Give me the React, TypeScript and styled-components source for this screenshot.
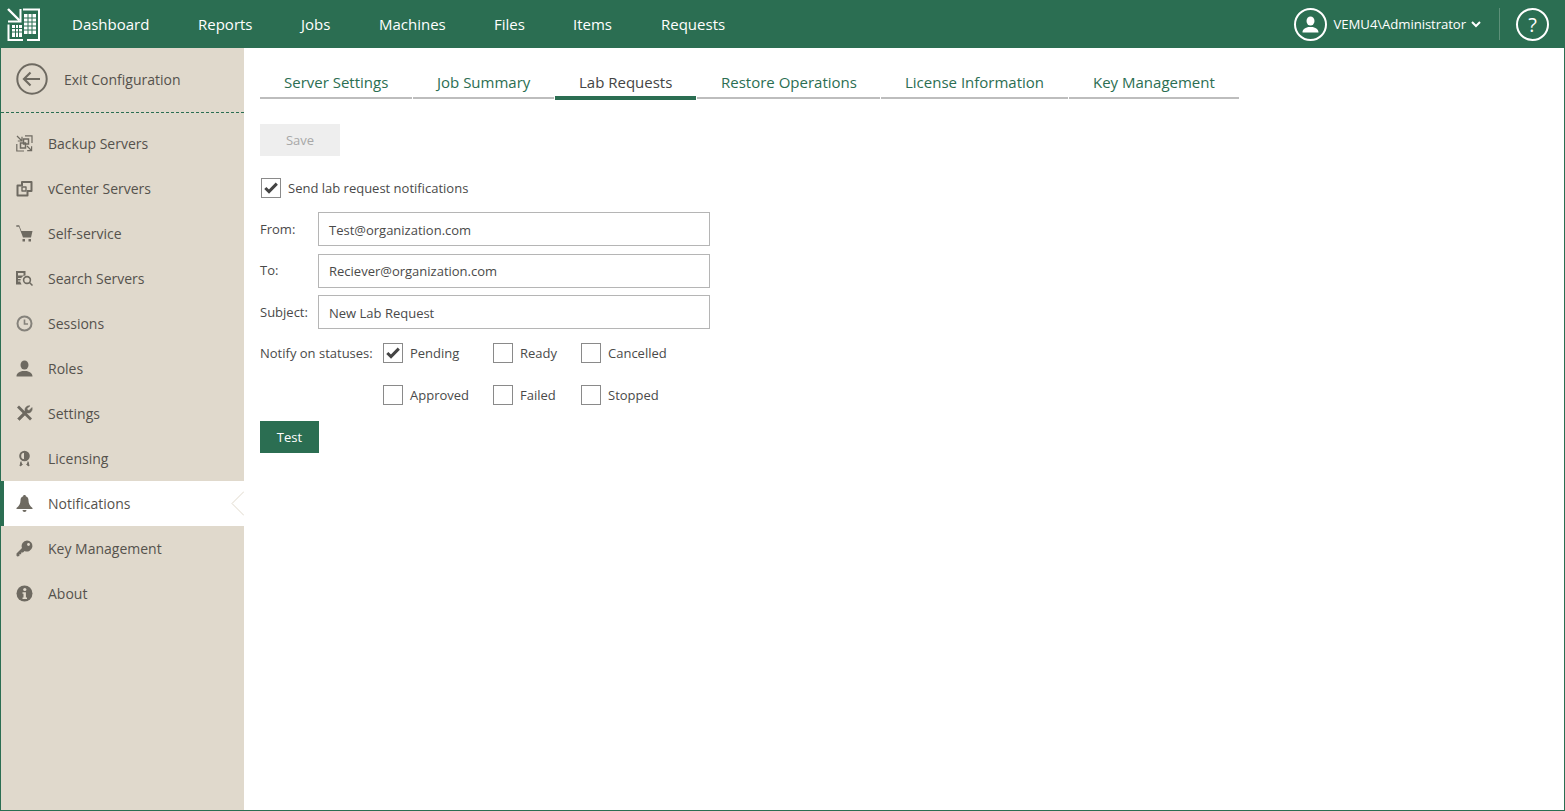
import React from "react";
import styled, { createGlobalStyle } from "styled-components";

const GREEN = "#2b6e52";
const TAN = "#e0d9cc";
const ICON = "#6e6a61";

const Global = createGlobalStyle`
  html, body { margin: 0; padding: 0; height: 100%; overflow: hidden; }
  body { font-family: "Open Sans", "Noto Sans", sans-serif; background: #fff; }
  #root { height: 100%; }
  * { box-sizing: border-box; }
`;

const Page = styled.div`
  width: 1565px;
  height: 811px;
  display: flex;
  flex-direction: column;
  border: solid ${GREEN};
  border-width: 0 1px 1px 1px;
`;

const TopBar = styled.header`
  height: 48px;
  margin: 0 -1px;
  flex: none;
  background: ${GREEN};
  color: #fff;
  display: flex;
  align-items: center;
`;

const LogoBox = styled.div`
  width: 48px;
  padding-left: 7px;
  display: flex;
  align-items: center;
`;

const NavList = styled.nav`
  display: flex;
  flex: 1;
`;

const NavItem = styled.a<{ $w: number }>`
  font-size: 15px;
  width: ${(p) => p.$w}px;
  padding-left: 24px;
  color: #fff;
  white-space: nowrap;
`;

const UserBox = styled.div`
  display: flex;
  align-items: center;
  font-size: 13.2px;
  letter-spacing: -0.09px;
  margin-right: 16px;
`;

const RoundIcon = styled.div`
  width: 33px;
  height: 33px;
  border: 2px solid #fff;
  border-radius: 50%;
  display: flex;
  align-items: center;
  justify-content: center;
  font-size: 20px;
`;

const UserName = styled.span`
  margin: 0 5px 0 7px;
  white-space: nowrap;
`;

const Divider = styled.div`
  width: 1px;
  height: 32px;
  background: #5d9079;
  margin: 0 16px 0 18px;
`;

const Body = styled.div`
  flex: 1;
  display: flex;
  min-height: 0;
`;

const Sidebar = styled.aside`
  width: 243px;
  flex: none;
  background: ${TAN};
  color: #55524c;
  font-size: 14px;
`;

const ExitRow = styled.div`
  height: 65px;
  border-bottom: 1px dashed ${GREEN};
  display: flex;
  align-items: center;
  padding: 0 0 2px 15px;
  gap: 16px;
  margin-bottom: 8px;
`;

const MenuList = styled.ul`
  list-style: none;
  margin: 0;
  padding: 0;
`;

const MenuRow = styled.li<{ $active?: boolean }>`
  position: relative;
  height: 45px;
  display: flex;
  align-items: center;
  padding-left: ${(p) => (p.$active ? "12px" : "15px")};
  gap: 15px;
  background: ${(p) => (p.$active ? "#fff" : "transparent")};
  border-left: ${(p) => (p.$active ? `3px solid ${GREEN}` : "0")};
`;

const Notch = styled.svg`
  position: absolute;
  right: 0;
  top: 10px;
`;

const IconSlot = styled.span`
  width: 17px;
  height: 17px;
  display: flex;
  align-items: center;
  justify-content: center;
  flex: none;
`;

const Main = styled.main`
  flex: 1;
  padding: 22px 0 0 16px;
  color: #444;
  font-size: 13px;
`;

const TabStrip = styled.div`
  display: flex;
  height: 30px;
  gap: 1px;
`;

const Tab = styled.a<{ $w: number; $active?: boolean }>`
  width: ${(p) => p.$w}px;
  padding: 1px 0 0 24px;
  font-size: 15px;
  line-height: 22px;
  white-space: nowrap;
  color: ${(p) => (p.$active ? "#444" : GREEN)};
  border-bottom: ${(p) => (p.$active ? `4px solid ${GREEN}` : "2px solid #bdbdbd")};
  height: ${(p) => (p.$active ? "30px" : "29px")};
`;

const SaveButton = styled.div`
  width: 80px;
  height: 32px;
  margin-top: 24px;
  background: #eeeeee;
  color: #a8a8a8;
  display: flex;
  align-items: center;
  justify-content: center;
`;

const TestButton = styled.div`
  width: 59px;
  height: 32px;
  margin-top: 5px;
  background: ${GREEN};
  color: #fff;
  display: flex;
  align-items: center;
  justify-content: center;
`;

const Box = styled.span`
  width: 20px;
  height: 20px;
  flex: none;
  border: 1px solid #8a8a8a;
  background: #fff;
  display: flex;
  align-items: center;
  justify-content: center;
`;

const CheckLabel = styled.label`
  display: flex;
  align-items: center;
  gap: 7px;
  white-space: nowrap;
  color: #4a4a4a;
`;

const TopCheck = styled.div`
  margin: 22px 0 14px 1px;
`;

const FieldGrid = styled.div`
  display: grid;
  grid-template-columns: 58px 392px;
  width: 450px;
  row-gap: 7.5px;
`;

const FieldLabel = styled.div`
  color: #4a4a4a;
  padding-top: 7.5px;
`;

const InputBox = styled.div`
  height: 34px;
  border: 1px solid #b5b5b5;
  padding: 1px 0 0 10px;
  display: flex;
  align-items: center;
  color: #4a4a4a;
`;

const StatusRow = styled.div`
  display: grid;
  grid-template-columns: 123px 110px 88px auto;
  grid-auto-rows: 42px;
  width: 460px;
  align-items: center;
  margin-top: 3px;
`;

const StatusHead = styled.div`
  color: #4a4a4a;
`;

const Check = () => (
  <svg width="14" height="12" viewBox="0 0 14 12">
    <path d="M1.300 6 5 9.600 12.800 1.600" fill="none" stroke="#444" strokeWidth="3" />
  </svg>
);

const Logo = () => (
  <svg width="33" height="33" viewBox="0 0 33 33" fill="none" stroke="#fff">
    <path d="M1 1 12.500 12.500" strokeWidth="2.400" />
    <path d="M13.500 1V13.500H1" strokeWidth="2" />
    <path d="M16 1.500H32V32H20" strokeWidth="2" />
    <path d="M1.500 16.500V32H16" strokeWidth="2" />
    <rect x="17" y="6" width="12" height="20" fill="#fff" stroke="none" />
    <path d="M17 10H29M17 14H29M17 18H29M17 22H29M21 6V26M25 6V26" stroke={GREEN} strokeWidth="1" />
    <rect x="5" y="17" width="10" height="12" fill="#fff" stroke="none" />
    <path d="M5 20.500H15M5 24H15M8.500 17V29M11.500 17V29" stroke={GREEN} strokeWidth="1" />
  </svg>
);

const icons: Record<string, React.ReactNode> = {
  backup: (
    <svg width="17" height="17" viewBox="0 0 17 17" fill="none" stroke={ICON} strokeWidth="1.200">
      <path d="M1 1 5.500 5.500M6 1.800V6H1.800" />
      <path d="M11 11l4.500 4.500M15.600 11.200V15.600H11.200" />
      <path d="M9 .8H16V8M.8 9V16H8" />
      <rect x="7.500" y="4" width="5" height="5" strokeWidth="1.500" />
      <rect x="4.500" y="8" width="5" height="5" strokeWidth="1.500" />
    </svg>
  ),
  vcenter: (
    <svg width="17" height="17" viewBox="0 0 17 17" fill="none" stroke={ICON} strokeWidth="2" strokeLinejoin="round">
      <path d="M6 5.500V2H15.500V11H11.500V15.500H1.500V5.500Z" />
      <path d="M6 7H10V11H6Z" strokeWidth="1.400" />
    </svg>
  ),
  cart: (
    <svg width="17" height="17" viewBox="0 0 17 17" fill={ICON}>
      <path d="M.3 .3H3.200L5.400 6H16.500L15 12.500H7L3 1.700H.3Z" />
      <rect x="6.500" y="14" width="2.500" height="2.500" />
      <rect x="12.500" y="14" width="2.500" height="2.500" />
    </svg>
  ),
  search: (
    <svg width="17" height="17" viewBox="0 0 17 17" fill={ICON}>
      <path d="M0 1H9.500V5.500A5.500 5.500 0 0 0 5.600 14.500H0Z" />
      <rect x="2" y="3" width="5.500" height="2.500" fill={TAN} />
      <rect x="2" y="8" width="3" height="1" fill={TAN} />
      <rect x="2" y="10.500" width="3" height="1" fill={TAN} />
      <circle cx="11" cy="10" r="3.400" fill="none" stroke={ICON} strokeWidth="1.600" />
      <path d="M13.500 12.500 16.500 15.500" stroke={ICON} strokeWidth="1.500" />
    </svg>
  ),
  clock: (
    <svg width="17" height="17" viewBox="0 0 17 17" fill="none" stroke="#85827b" strokeWidth="2">
      <circle cx="8.500" cy="8.500" r="7" />
      <path d="M8.500 4.500V9H12" strokeWidth="1.600" />
    </svg>
  ),
  user: (
    <svg width="17" height="17" viewBox="0 0 17 17" fill={ICON}>
      <ellipse cx="8.500" cy="5" rx="4" ry="4.600" />
      <path d="M.5 16.500c0-3.500 3-4.400 5.500-5.400h5c2.500 1 5.500 1.900 5.500 5.400z" />
    </svg>
  ),
  tools: (
    <svg width="17" height="17" viewBox="0 0 17 17" fill="none" stroke={ICON}>
      <path d="M2 1.500 15 14.500" strokeWidth="2.800" />
      <path d="M16 2.500 13 5.500 11.500 5 11 3.500 14 .8A4.300 4.300 0 0 0 9 6L1.500 13.500 3.500 15.500 11 8A4.300 4.300 0 0 0 16 2.500Z" fill={ICON} strokeWidth=".5" />
    </svg>
  ),
  license: (
    <svg width="17" height="17" viewBox="0 0 17 17" fill="none" stroke={ICON}>
      <circle cx="8.500" cy="6" r="4.300" strokeWidth="2" />
      <path d="M8.500 2.500a3.500 3.500 0 0 1 0 7z" fill={ICON} />
      <path d="M5 11.500 4 16l2.500-1.500M12 11.500l1 4.500-2.500-1.500" fill={ICON} strokeWidth="1" />
    </svg>
  ),
  bell: (
    <svg width="17" height="17" viewBox="0 0 17 17" fill={ICON}>
      <path d="M8.500 0c1 0 1.300.6 1.300 1.200 2 .6 2.700 2.300 2.700 4.300 0 3.500 1.500 5.500 4 7.500v1H.5v-1c2.500-2 4-4 4-7.500 0-2 .7-3.700 2.700-4.300C7.200.6 7.500 0 8.500 0z" />
      <path d="M6.500 15h4a2 2 0 0 1-4 0z" />
    </svg>
  ),
  key: (
    <svg width="17" height="17" viewBox="0 0 17 17" fill={ICON}>
      <path d="M11 .5a5.500 5.500 0 1 1-2.400 10.500L7 12.500H5.200v1.800H3.400V16L1.300 16.500.5 15.700V13.500L6 8A5.500 5.500 0 0 1 11 .5z" />
      <circle cx="12.500" cy="4.500" r="1.400" fill={TAN} />
    </svg>
  ),
  info: (
    <svg width="17" height="17" viewBox="0 0 17 17">
      <circle cx="8.500" cy="8.500" r="8" fill={ICON} />
      <circle cx="8.800" cy="4.500" r="1.600" fill={TAN} />
      <path d="M6.500 7.200h3.400v5.300h1.100V14H6.500v-1.500h1V8.700h-1z" fill={TAN} />
    </svg>
  ),
};

const menu = [
  ["backup", "Backup Servers"],
  ["vcenter", "vCenter Servers"],
  ["cart", "Self-service"],
  ["search", "Search Servers"],
  ["clock", "Sessions"],
  ["user", "Roles"],
  ["tools", "Settings"],
  ["license", "Licensing"],
  ["bell", "Notifications"],
  ["key", "Key Management"],
  ["info", "About"],
];

const navs: [string, number][] = [
  ["Dashboard", 126],
  ["Reports", 103],
  ["Jobs", 78],
  ["Machines", 115],
  ["Files", 79],
  ["Items", 88],
  ["Requests", 120],
];

const tabs: [string, number][] = [
  ["Server Settings", 152],
  ["Job Summary", 141],
  ["Lab Requests", 141],
  ["Restore Operations", 183],
  ["License Information", 187],
  ["Key Management", 170],
];

const CheckItem = ({ label, checked }: { label: string; checked?: boolean }) => (
  <CheckLabel>
    <Box>{checked && <Check />}</Box>
    {label}
  </CheckLabel>
);

export default function App() {
  return (
    <Page>
      <Global />
      <TopBar>
        <LogoBox>
          <Logo />
        </LogoBox>
        <NavList>
          {navs.map(([t, w]) => (
            <NavItem key={t} $w={w}>
              {t}
            </NavItem>
          ))}
        </NavList>
        <UserBox>
          <RoundIcon>
            <svg width="17" height="17" viewBox="0 0 17 17" fill="#fff">
              <ellipse cx="8.500" cy="5" rx="4" ry="4.600" />
              <path d="M.5 16.500c0-3.500 3-4.400 5.500-5.400h5c2.500 1 5.500 1.900 5.500 5.400z" />
            </svg>
          </RoundIcon>
          <UserName>VEMU4\Administrator</UserName>
          <svg width="10" height="7" viewBox="0 0 10 7" fill="none" stroke="#fff" strokeWidth="2">
            <path d="M1 1l4 4 4-4" />
          </svg>
          <Divider />
          <RoundIcon>?</RoundIcon>
        </UserBox>
      </TopBar>
      <Body>
        <Sidebar>
          <ExitRow>
            <svg width="32" height="32" viewBox="0 0 32 32" fill="none" stroke={ICON}>
              <circle cx="16" cy="16" r="14.700" strokeWidth="2" />
              <path d="M24 16H8M14.500 9.500 8 16l6.500 6.500" strokeWidth="2.200" />
            </svg>
            Exit Configuration
          </ExitRow>
          <MenuList>
            {menu.map(([k, t]) => (
              <MenuRow key={k} $active={k === "bell"}>
                <IconSlot>{icons[k]}</IconSlot>
                {t}
                {k === "bell" && (
                  <Notch width="13" height="25" viewBox="0 0 13 25">
                    <path d="M13 .5 1 12.500 13 24.500" fill="#fff" stroke={TAN} strokeWidth="1" />
                  </Notch>
                )}
              </MenuRow>
            ))}
          </MenuList>
        </Sidebar>
        <Main>
          <TabStrip>
            {tabs.map(([t, w]) => (
              <Tab key={t} $w={w} $active={t === "Lab Requests"}>
                {t}
              </Tab>
            ))}
          </TabStrip>
          <SaveButton>Save</SaveButton>
          <TopCheck>
            <CheckItem label="Send lab request notifications" checked />
          </TopCheck>
          <FieldGrid>
            <FieldLabel>From:</FieldLabel>
            <InputBox>Test@organization.com</InputBox>
            <FieldLabel>To:</FieldLabel>
            <InputBox>Reciever@organization.com</InputBox>
            <FieldLabel>Subject:</FieldLabel>
            <InputBox>New Lab Request</InputBox>
          </FieldGrid>
          <StatusRow>
            <StatusHead>Notify on statuses:</StatusHead>
            <CheckItem label="Pending" checked />
            <CheckItem label="Ready" />
            <CheckItem label="Cancelled" />
            <span />
            <CheckItem label="Approved" />
            <CheckItem label="Failed" />
            <CheckItem label="Stopped" />
          </StatusRow>
          <TestButton>Test</TestButton>
        </Main>
      </Body>
    </Page>
  );
}
